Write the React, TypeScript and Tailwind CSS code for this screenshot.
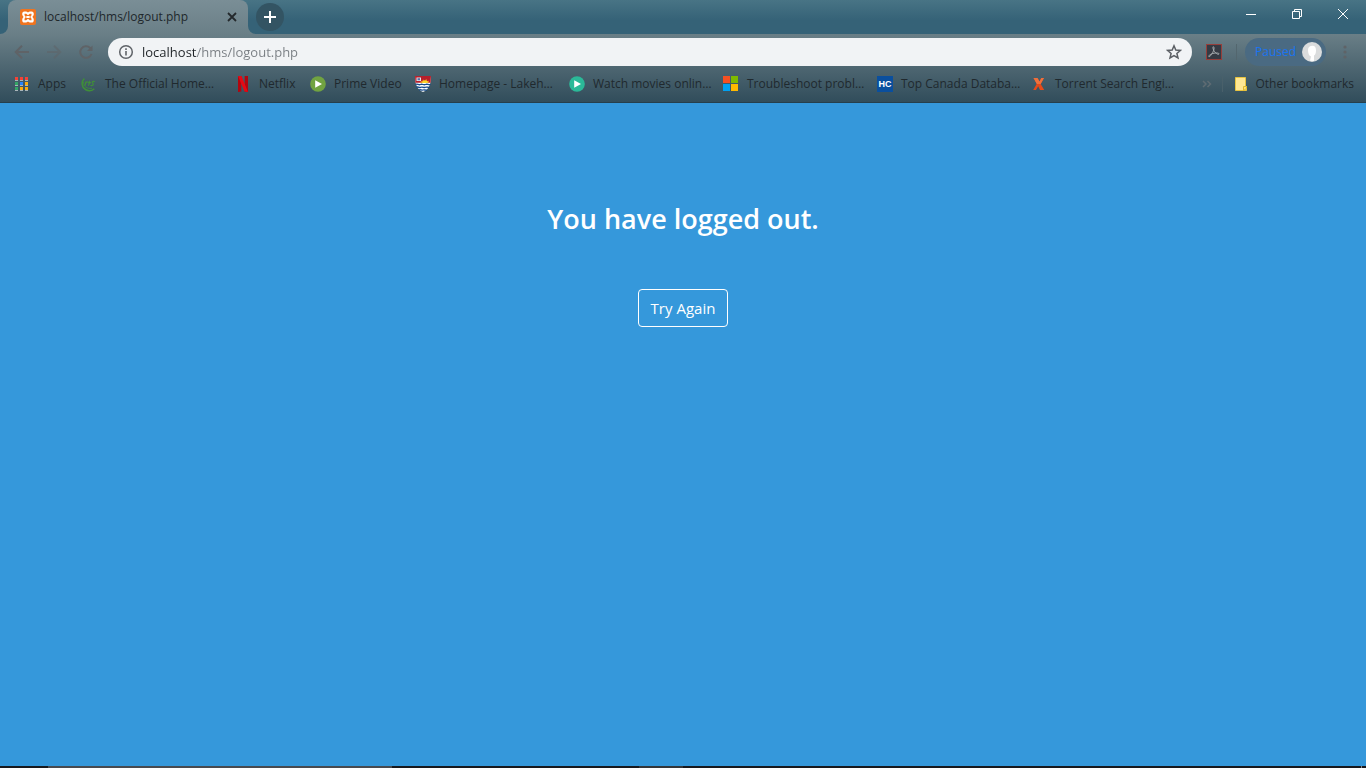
import type { ReactNode } from "react";

function XamppIcon() {
  return (
    <svg width="16" height="16" viewBox="0 0 16 16" className="shrink-0">
      <rect width="16" height="16" rx="2" fill="#f0741f" />
      <path
        d="M4.300 2.500h1.800C7.200 2.500 7.500 3.500 8 3.500s.8-1 1.900-1h1.800c1.400 0 2.100 1 2.100 2.600 0 1.900-1.200 2-1.200 2.900s1.200 1 1.200 2.900c0 1.600-.7 2.600-2.100 2.600H9.900c-1.100 0-1.400-1-1.900-1s-.8 1-1.900 1H4.300c-1.400 0-2.100-1-2.100-2.600C2.200 9 3.400 8.900 3.400 8s-1.200-1-1.200-2.900c0-1.600.7-2.600 2.100-2.600z"
        fill="#fff"
      />
      <path
        d="M4.500 4.800h1.700L8 6.300l1.800-1.500h1.700v1.500L10.200 8l1.300 1.700v1.500H9.800L8 9.700l-1.800 1.500H4.500V9.700L5.800 8 4.500 6.300z"
        fill="#f0741f"
      />
      <path d="M6.300 7h3.400v2H6.300z" fill="#fff" />
    </svg>
  );
}

function AppsIcon() {
  const rows = [
    ["#f44336", "#f44336", "#f44336"],
    ["#34a566", "#2684fc", "#fbab0c"],
    ["#34a566", "#fbab0c", "#fbab0c"],
  ];
  return (
    <svg width="16" height="16" viewBox="0 0 16 16" className="shrink-0">
      {rows.map((row, r) =>
        row.map((color, c) => (
          <g key={`${r}-${c}`}>
            <rect x={1 + c * 5} y={1 + r * 5} width="3" height="3" fill={color} />
            <rect x={1 + c * 5} y={4 + r * 5} width="3" height="1" fill="#a9b5ba" />
          </g>
        )),
      )}
    </svg>
  );
}

function LeafIcon() {
  return (
    <svg width="16" height="16" viewBox="0 0 16 16" className="shrink-0" fill="none" stroke="#3f8f38">
      <path d="M3.300 2.500C0 6 .5 11 4.500 13.500c3 1.900 6.500 1.200 8.800-.8" strokeWidth="1.500" />
      <path d="M2.500 6c0 4.500 3.500 7 8.500 6.300" strokeWidth=".8" />
      <path
        d="M4 9.500l1-4M4.700 7.200c.5-1 1.200-1.500 2.200-1.200M7.300 9.700c.8-1 1.200-3 1.200-5M7 6.700h3M13.800 5.600c-1.900-.7-3 .2-2.200 1.400.6.900 1 1.700 0 2.300-.8.400-1.700.2-2-.2"
        strokeWidth="1.200"
      />
    </svg>
  );
}

function NetflixIcon() {
  return (
    <svg width="16" height="16" viewBox="0 0 16 16" className="shrink-0">
      <path d="M3 0h3.300v15.500L3 16zM9.700 0H13v16l-3.300-.5z" fill="#b1060f" />
      <path d="M3 0h3.500L13 16l-3.500-.5z" fill="#e50914" />
    </svg>
  );
}

function PlayIcon({ color }: { color: string }) {
  return (
    <svg width="16" height="16" viewBox="0 0 16 16" className="shrink-0">
      <circle cx="8" cy="8" r="7.800" fill={color} />
      <path d="M5.200 4.200L12 8l-6.800 3.800z" fill="#fff" />
    </svg>
  );
}

function CrestIcon() {
  return (
    <svg width="16" height="16" viewBox="0 0 16 16" className="shrink-0">
      <path d="M0 0h16c0 8-2 13.500-8 16C2 13.500 0 8 0 0z" fill="#fff" />
      <path d="M0 0h16l-.4 6.800H.4z" fill="#b71f2b" />
      <path d="M5.500 7l.2-2 1.600.3L8 3.500l1.700 1L11.500 3l.6 1.900 2-.1-.8 2.200z" fill="#f28d22" />
      <path d="M7 7a3 2.500 0 016 0z" fill="#fbd52b" />
      <rect x="1.500" y="1.500" width="4.500" height="3.500" fill="#e3e7f0" />
      <rect x="2.500" y="2.200" width="2.500" height="2" fill="#5a6fa3" />
      <path
        d="M.5 8.500c2-1.200 3 1 5 0s3 1 5 0 3 .8 5 0M1.500 11.300c2-1 3 .8 4.500 0s3 .8 4.500 0 2.500.5 4 0M4 14c1.500-.8 2.500.5 4 0s2.500.5 4 0"
        fill="none"
        stroke="#164a8a"
        strokeWidth="1.300"
      />
    </svg>
  );
}

function MicrosoftIcon() {
  return (
    <svg width="16" height="16" viewBox="0 0 16 16" className="shrink-0" shapeRendering="crispEdges">
      <path fill="#f65022" d="M0 0h7v7H0z" />
      <path fill="#7fba00" d="M8 0h7v7H8z" />
      <path fill="#00a1f1" d="M0 8h7v7H0z" />
      <path fill="#ffb900" d="M8 8h7v7H8z" />
    </svg>
  );
}

function HcIcon() {
  return (
    <span className="flex size-4 shrink-0 items-center justify-center bg-[#0a4f9e] font-['Liberation_Sans'] text-[9px] font-bold text-white">
      HC
    </span>
  );
}

function TorrentIcon() {
  return (
    <svg width="16" height="16" viewBox="0 0 16 16" className="shrink-0">
      <path d="M2.500 2h4l2 3.500L10.300 2H13L9.700 8l3.500 6H9L7.200 10.300 5 14H2.200l3.600-6.200z" fill="#e64a19" />
      <path d="M2.500 2h4l2 3.500L10.300 2H13L9.700 8H5.800z" fill="#f0703c" />
    </svg>
  );
}

function NoteIcon() {
  return (
    <svg width="16" height="16" viewBox="0 0 16 16" className="shrink-0">
      <path d="M2.500 1.500h10v9h1v4h-11z" fill="#ffe793" stroke="#e9c440" />
      <path d="M10.500 14.500v-4h3v2z" fill="#ffe27a" stroke="#e0b92c" />
    </svg>
  );
}

type Mark = { label: string; icon: ReactNode; width: string };

const bookmarks: Mark[] = [
  { label: "Apps", icon: <AppsIcon />, width: "w-[67px]" },
  { label: "The Official Home…", icon: <LeafIcon />, width: "w-[154px]" },
  { label: "Netflix", icon: <NetflixIcon />, width: "w-[75px]" },
  { label: "Prime Video", icon: <PlayIcon color="#71a341" />, width: "w-[105px]" },
  { label: "Homepage - Lakeh…", icon: <CrestIcon />, width: "w-[154px]" },
  { label: "Watch movies onlin…", icon: <PlayIcon color="#2bb998" />, width: "w-[154px]" },
  { label: "Troubleshoot probl…", icon: <MicrosoftIcon />, width: "w-[154px]" },
  { label: "Top Canada Databa…", icon: <HcIcon />, width: "w-[154px]" },
  { label: "Torrent Search Engi…", icon: <TorrentIcon />, width: "w-[154px]" },
];

function TabStrip() {
  return (
    <div className="flex h-[34px] items-stretch justify-between bg-linear-to-b from-[#487485] to-[#356277] to-60%">
      <div className="flex">
        <div className="relative ml-2 flex w-60 items-center rounded-t-lg bg-linear-to-b from-[#7a8e96] to-[#6a7f87] pr-2 pl-3">
          <svg className="absolute bottom-0 -left-2" width="8" height="8" viewBox="0 0 8 8">
            <path d="M8 0v8H0a8 8 0 008-8z" fill="#6b8088" />
          </svg>
          <svg className="absolute -right-2 bottom-0" width="8" height="8" viewBox="0 0 8 8">
            <path d="M0 0v8h8a8 8 0 01-8-8z" fill="#6b8088" />
          </svg>
          <XamppIcon />
          <span className="ml-2 grow text-xs text-[#20272b]">localhost/hms/logout.php</span>
          <button type="button" aria-label="Close tab" className="flex size-4 items-center justify-center">
            <svg width="10" height="10" viewBox="0 0 10 10" stroke="#24292c" strokeWidth="1.800">
              <path d="M1 1l8 8M9 1L1 9" />
            </svg>
          </button>
        </div>
        <button
          type="button"
          aria-label="New tab"
          className="ml-2 flex size-7 items-center justify-center self-center rounded-full bg-[#335463]"
        >
          <svg width="12" height="12" viewBox="0 0 12 12" stroke="#fff" strokeWidth="2">
            <path d="M6 0v12M0 6h12" />
          </svg>
        </button>
      </div>
      <div className="flex h-7 items-center">
        <button type="button" aria-label="Minimize" className="flex h-full w-[46px] items-center justify-center">
          <svg width="10" height="10" viewBox="0 0 10 10" stroke="#fff">
            <path d="M0 5.500h10" />
          </svg>
        </button>
        <button type="button" aria-label="Restore" className="flex h-full w-[46px] items-center justify-center">
          <svg width="10" height="10" viewBox="0 0 10 10" stroke="#fff" fill="none">
            <path d="M.5 2.500h7v7h-7zM2.500 2.500v-2h7v7h-2" />
          </svg>
        </button>
        <button type="button" aria-label="Close window" className="flex h-full w-[46px] items-center justify-center">
          <svg width="10" height="10" viewBox="0 0 10 10" stroke="#fff">
            <path d="M0 0l10 10M10 0L0 10" />
          </svg>
        </button>
      </div>
    </div>
  );
}

function Toolbar() {
  return (
    <div className="flex h-9 items-center pr-[13px] pl-[14px]">
      <div className="flex w-[94px] gap-4 text-[#5f6367]">
        <button type="button" aria-label="Back">
          <svg width="16" height="16" viewBox="0 0 16 16" fill="none" stroke="currentColor" strokeWidth="2">
            <path d="M15 8H2.500M8 1.700L1.700 8 8 14.300" />
          </svg>
        </button>
        <button type="button" aria-label="Forward" className="opacity-50">
          <svg width="16" height="16" viewBox="0 0 16 16" fill="none" stroke="currentColor" strokeWidth="2">
            <path d="M1 8h12.500M8 1.700L14.300 8 8 14.300" />
          </svg>
        </button>
        <button type="button" aria-label="Reload">
          <svg width="16" height="16" viewBox="0 0 16 16" fill="none" stroke="currentColor" strokeWidth="2">
            <path d="M13.500 10A5.800 5.800 0 1112.200 4L13.500 5.300" />
            <path d="M14.500 1.500v5.500H9z" fill="currentColor" stroke="none" />
          </svg>
        </button>
      </div>
      <div className="flex h-7 grow items-center rounded-full bg-[#f1f3f5] px-[10px]">
        <svg width="16" height="16" viewBox="0 0 16 16" fill="none" stroke="#5f6368" className="shrink-0">
          <circle cx="8" cy="8" r="6.300" strokeWidth="1.500" />
          <path d="M8 7v4.500M8 4.300V6" strokeWidth="1.600" />
        </svg>
        <input
          type="text"
          aria-label="Address"
          defaultValue="localhost/hms/logout.php"
          className="ml-2 h-6 grow bg-[linear-gradient(to_right,#1f2327_55px,#787d82_55px)] bg-clip-text text-[13px] text-transparent outline-none"
        />
        <button type="button" aria-label="Bookmark this page">
          <svg width="16" height="16" viewBox="0 0 16 16" fill="none" stroke="#5b5f64" strokeWidth="1.500">
            <path d="M8 1.800l1.800 4.200 4.600.4-3.500 3 1.100 4.500L8 11.500l-4 2.400 1.100-4.500-3.500-3L6.200 6z" />
          </svg>
        </button>
      </div>
      <button type="button" aria-label="Acrobat" className="ml-[14px]">
        <svg width="16" height="16" viewBox="0 0 16 16" fill="none">
          <rect x=".5" y=".5" width="15" height="15" fill="#353a43" stroke="#963e3a" />
          <path
            d="M7.200 2.700c1.500.1.900 3.300-.6 6-1.200 2.300-2.800 4.200-3.700 4-.8-1.200 2.200-3 5.200-3.500 2.400-.4 5-.3 5 .7-.4 1.300-3.200-.4-4.500-2.200C7.300 6 6.400 3.400 7.200 2.700z"
            stroke="#a3a9ac"
          />
        </svg>
      </button>
      <span className="mr-2 ml-[14px] h-4 w-px bg-[#53666e]" />
      <button
        type="button"
        className="flex h-7 items-center gap-2 rounded-full bg-[#4a6a82] pr-1 pl-[10px] text-xs text-[#1a73f0]"
      >
        <span className="w-[39px] text-left">Paused</span>
        <svg width="20" height="20" viewBox="0 0 20 20">
          <circle cx="10" cy="10" r="10" fill="#dadcdd" />
          <path d="M6 8c0-3 2-4.300 4.500-4.300S14 5.500 14 8.500c0 3-1 4.500-2 5V19l-4-.2 1-4.300C7 14 6 11 6 8z" fill="#fff" />
        </svg>
      </button>
      <button type="button" aria-label="Menu" className="ml-[11px]">
        <svg width="16" height="16" viewBox="0 0 16 16" fill="#5f6367">
          <circle cx="8" cy="3" r="1.600" />
          <circle cx="8" cy="8" r="1.600" />
          <circle cx="8" cy="13" r="1.600" />
        </svg>
      </button>
    </div>
  );
}

function BookmarksBar() {
  return (
    <nav aria-label="Bookmarks" className="flex h-7 items-center pr-[12px] pl-[14px] text-xs text-[#20292e]">
      <div className="flex grow">
        {bookmarks.map((mark) => (
          <a key={mark.label} href="#" className={`flex shrink-0 items-center gap-2 whitespace-nowrap ${mark.width}`}>
            {mark.icon}
            <span>{mark.label}</span>
          </a>
        ))}
      </div>
      <button type="button" aria-label="More bookmarks" className="mr-[10px]">
        <svg width="10" height="8" viewBox="0 0 10 8" fill="none" stroke="#5f6c73" strokeWidth="1.500">
          <path d="M1 1l3 3-3 3M5.500 1l3 3-3 3" />
        </svg>
      </button>
      <span className="mr-[10px] h-4 w-px bg-[#49606a]" />
      <a href="#" className="flex items-center gap-1.5 whitespace-nowrap">
        <NoteIcon />
        <span>Other bookmarks</span>
      </a>
    </nav>
  );
}

export default function App() {
  return (
    <div className="flex min-h-screen flex-col bg-[#3598db] font-['Open_Sans','Noto_Sans',sans-serif]">
      <header>
        <TabStrip />
        <div className="border-b border-[#263f4c] bg-linear-to-b from-[#6a7f87] to-[#314d5b] pb-1">
          <Toolbar />
          <BookmarksBar />
        </div>
      </header>
      <main className="flex grow flex-col items-center pt-[100px] text-white">
        <h1 className="text-[27px] leading-8 font-semibold">You have logged out.</h1>
        <button type="button" className="mt-[54px] h-[38px] rounded border border-white px-3 text-[15px]">
          Try Again
        </button>
      </main>
      <footer className="flex h-0.5 bg-[#17191e]">
        <span className="ml-12 w-[344px] bg-[#474a50]" />
        <span className="ml-[247px] w-[44px] bg-[#33363a]" />
        <span className="mr-1 ml-auto w-px bg-[#85898c]" />
      </footer>
    </div>
  );
}
